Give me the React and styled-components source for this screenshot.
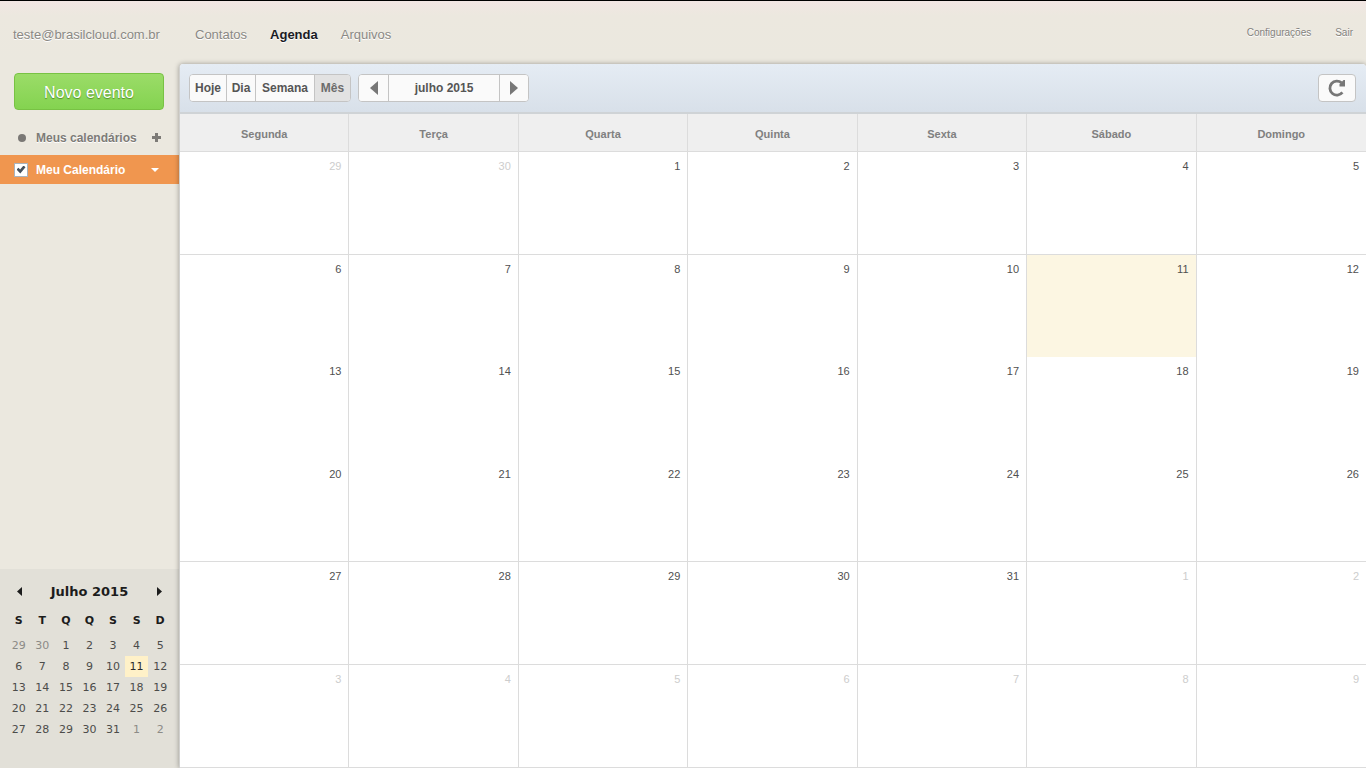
import React from "react";
import styled, { createGlobalStyle } from "styled-components";

const GlobalStyle = createGlobalStyle`
  *, *::before, *::after { box-sizing: border-box; }
  body {
    margin: 0;
    font-family: "Liberation Sans", Arial, sans-serif;
    font-size: 12px;
    color: #555;
    background: #ebe8df;
  }
  button, input { font: inherit; margin: 0; }
  button { cursor: pointer; }
`;

const Page = styled.div`
  display: flex;
  flex-direction: column;
  min-height: 100vh;
  border-top: 1px solid #000;
  background: linear-gradient(#f2e6e4, #ece8df 14px, #ebe8df 60px);
`;

const TopBar = styled.header`
  display: flex;
  align-items: center;
  height: 63px;
  padding: 5px 13px 0;
  text-shadow: 0 1px 0 #fff;
`;

const Account = styled.span`
  width: 182px;
  font-size: 13px;
  line-height: 16px;
  color: #8a8884;
`;

const TopNav = styled.nav`
  display: flex;
  flex: 1;
  gap: 23px;
`;

const NavLink = styled.a`
  font-size: 13px;
  line-height: 16px;
  font-weight: ${(p) => (p.$active ? "bold" : "normal")};
  color: ${(p) => (p.$active ? "#1a1a24" : "#8a8884")};
  text-decoration: none;
`;

const UserNav = styled.nav`
  display: flex;
  gap: 24px;
`;

const SmallLink = styled.a`
  font-size: 10px;
  line-height: 16px;
  padding-bottom: 4px;
  color: #84827e;
  text-decoration: none;
`;

const Body = styled.div`
  display: flex;
  flex: 1;
`;

const Sidebar = styled.aside`
  display: flex;
  flex-direction: column;
  width: 179px;
  flex-shrink: 0;
`;

const NewEventButton = styled.button`
  height: 37px;
  margin: 9px 15px 14px 14px;
  padding: 2px 0 0;
  border: 1px solid #78c244;
  border-radius: 4px;
  background: linear-gradient(#9bdc68, #84d350);
  color: #fff;
  font-size: 16px;
  text-shadow: 0 1px 1px #4f8a2a;
`;

const GroupRow = styled.div`
  display: flex;
  align-items: center;
  height: 31px;
  padding: 0 18px 4px;
  font-weight: bold;
  color: #7d7b77;
  text-shadow: 0 1px 0 #fff;
`;

const Dot = styled.span`
  width: 8px;
  height: 8px;
  border-radius: 4px;
  background: #7a7875;
`;

const GroupTitle = styled.span`
  flex: 1;
  padding-left: 10px;
`;

const IconButton = styled.button`
  display: flex;
  align-items: center;
  justify-content: center;
  padding: 0;
  border: 0;
  background: none;
  color: inherit;
`;

const CalendarRow = styled.div`
  display: flex;
  align-items: center;
  height: 29px;
  padding: 0 19px 0 14px;
  background: #f0964f;
  color: #fff;
  font-weight: bold;
`;

const CalendarLabel = styled.label`
  display: flex;
  flex: 1;
  align-items: center;
  gap: 8px;
`;

const CheckBox = styled.input`
  appearance: none;
  display: grid;
  place-items: center;
  width: 14px;
  height: 14px;
  border: 1px solid #a9b3bd;
  background: #fff;
  &:checked::after {
    content: "";
    width: 9px;
    height: 8px;
    background: #44505c;
    clip-path: polygon(0 50%, 22% 28%, 40% 50%, 78% 0, 100% 22%, 42% 100%);
  }
`;

const MiniPanel = styled.section`
  margin-top: auto;
  height: 199px;
  padding: 12px 7px 0;
  background: #e2e0d8;
  font-family: "DejaVu Sans", Verdana, sans-serif;
  color: #1c1c1c;
`;

const MiniHead = styled.div`
  display: flex;
  align-items: center;
  justify-content: space-between;
  height: 21px;
  padding: 0 10px;
`;

const MiniTitle = styled.h2`
  margin: 0;
  font-size: 13px;
  line-height: 20px;
  font-weight: bold;
`;

const MiniTable = styled.table`
  width: 165px;
  table-layout: fixed;
  border-collapse: collapse;
  margin-top: 4px;
  font-size: 11px;
  line-height: 13px;
`;

const MiniDayName = styled.th`
  height: 29px;
  padding: 0;
`;

const MiniDay = styled.td`
  height: 21px;
  padding: 0;
  text-align: center;
  color: ${(p) => (p.$today ? "#2c2c2c" : p.$other ? "#8c8b87" : "#4c4c4a")};
  background: ${(p) => (p.$today ? "#fff1c8" : "none")};
`;

const Main = styled.main`
  flex: 1;
  min-width: 0;
  border-left: 1px solid #d0d0ce;
  border-radius: 4px 4px 0 0;
  background: #fff;
  box-shadow: 0 0 5px rgba(0, 0, 0, 0.35);
  overflow: hidden;
`;

const Toolbar = styled.div`
  display: flex;
  align-items: center;
  height: 50px;
  padding: 0 10px 1px 9px;
  border-bottom: 2px solid #cfd3d6;
  background: linear-gradient(#e5ecf4, #d8e0e9);
`;

const ButtonGroup = styled.div`
  display: flex;
  height: 28px;
  margin-right: 7px;
  border: 1px solid #c4c4c4;
  border-radius: 4px;
  background: #fafafa;
  overflow: hidden;
`;

const ToolButton = styled.button`
  display: flex;
  align-items: center;
  justify-content: center;
  width: ${(p) => p.$width}px;
  padding: 0;
  border: 0;
  border-right: 1px solid #c4c4c4;
  background: ${(p) => (p.$active ? "#e2e2e2" : "#fafafa")};
  color: ${(p) => (p.$active ? "#6c6c6c" : "#555")};
  font-weight: bold;
  &:last-child { border-right: 0; }
  svg { color: #777; }
`;

const RefreshButton = styled.button`
  display: flex;
  align-items: center;
  justify-content: center;
  width: 38px;
  height: 28px;
  margin-left: auto;
  padding: 0;
  border: 1px solid #c4c4c4;
  border-radius: 4px;
  background: #fafafa;
`;

const MonthTable = styled.table`
  width: 100%;
  table-layout: fixed;
  border-collapse: separate;
  border-spacing: 0;
`;

const WeekDay = styled.th`
  height: 38px;
  padding: 3px 0 0;
  border-right: 1px solid #dcdcdc;
  border-bottom: 1px solid #dcdcdc;
  background: #efefef;
  color: #808080;
  font-size: 11px;
  line-height: 14px;
  &:last-child { border-right: 0; }
`;

const Day = styled.td`
  height: calc((100vh - 153px) / 6);
  padding: 7px 7px 0;
  vertical-align: top;
  text-align: right;
  font-size: 11px;
  line-height: 14px;
  border-right: 1px solid #dcdcdc;
  border-bottom: ${(p) => (p.$line ? "1px solid #dcdcdc" : "0")};
  color: ${(p) => (p.$other ? "#cdcdcd" : "#505050")};
  background: ${(p) => (p.$today ? "#fcf6e2" : "#fff")};
  &:last-child { border-right: 0; }
  tr:last-child > & { height: calc((100vh - 153px) / 6 + 1px); }
`;

const Arrow = ({ dir, w, h }) => (
  <svg width={w} height={h} viewBox="0 0 8 14" preserveAspectRatio="none" fill="currentColor" aria-hidden="true">
    <path d={dir === "left" ? "M8 0V14L0 7Z" : "M0 0V14L8 7Z"} />
  </svg>
);

const weekDays = ["Segunda", "Terça", "Quarta", "Quinta", "Sexta", "Sábado", "Domingo"];
const miniNames = ["S", "T", "Q", "Q", "S", "S", "D"];
const ruledWeeks = [0, 3, 4, 5];

const weeks = Array.from({ length: 6 }, (_, w) =>
  Array.from({ length: 7 }, (_, d) => {
    const date = new Date(2015, 5, 29 + w * 7 + d);
    const other = date.getMonth() !== 6;
    return { day: date.getDate(), other, today: !other && date.getDate() === 11 };
  })
);

export default function App() {
  return (
    <>
      <GlobalStyle />
      <Page>
        <TopBar>
          <Account>teste@brasilcloud.com.br</Account>
          <TopNav>
            <NavLink href="#contatos">Contatos</NavLink>
            <NavLink href="#agenda" $active>Agenda</NavLink>
            <NavLink href="#arquivos">Arquivos</NavLink>
          </TopNav>
          <UserNav>
            <SmallLink href="#config">Configurações</SmallLink>
            <SmallLink href="#sair">Sair</SmallLink>
          </UserNav>
        </TopBar>
        <Body>
          <Sidebar>
            <NewEventButton type="button">Novo evento</NewEventButton>
            <GroupRow>
              <Dot />
              <GroupTitle>Meus calendários</GroupTitle>
              <IconButton type="button" aria-label="Adicionar calendário">
                <svg width="9" height="9" viewBox="0 0 9 9" fill="currentColor">
                  <path d="M3 0H6V3H9V6H6V9H3V6H0V3H3Z" />
                </svg>
              </IconButton>
            </GroupRow>
            <CalendarRow>
              <CalendarLabel>
                <CheckBox type="checkbox" defaultChecked />
                Meu Calendário
              </CalendarLabel>
              <IconButton type="button" aria-label="Opções do calendário">
                <svg width="10" height="5" viewBox="0 0 10 5" fill="currentColor">
                  <path d="M1 1H9L5 5Z" />
                </svg>
              </IconButton>
            </CalendarRow>
            <MiniPanel>
              <MiniHead>
                <IconButton type="button" aria-label="Mês anterior"><Arrow dir="left" w={5} h={9} /></IconButton>
                <MiniTitle>Julho 2015</MiniTitle>
                <IconButton type="button" aria-label="Próximo mês"><Arrow dir="right" w={5} h={9} /></IconButton>
              </MiniHead>
              <MiniTable>
                <thead>
                  <tr>{miniNames.map((n, i) => <MiniDayName key={i}>{n}</MiniDayName>)}</tr>
                </thead>
                <tbody>
                  {weeks.slice(0, 5).map((week, w) => (
                    <tr key={w}>
                      {week.map((d) => (
                        <MiniDay key={d.day} $other={d.other} $today={d.today}>{d.day}</MiniDay>
                      ))}
                    </tr>
                  ))}
                </tbody>
              </MiniTable>
            </MiniPanel>
          </Sidebar>
          <Main>
            <Toolbar>
              <ButtonGroup>
                <ToolButton type="button" $width={37}>Hoje</ToolButton>
                <ToolButton type="button" $width={29}>Dia</ToolButton>
                <ToolButton type="button" $width={59}>Semana</ToolButton>
                <ToolButton type="button" $width={35} $active>Mês</ToolButton>
              </ButtonGroup>
              <ButtonGroup>
                <ToolButton type="button" $width={30} aria-label="Anterior"><Arrow dir="left" w={8} h={14} /></ToolButton>
                <ToolButton type="button" $width={111}>julho 2015</ToolButton>
                <ToolButton type="button" $width={28} aria-label="Próximo"><Arrow dir="right" w={8} h={14} /></ToolButton>
              </ButtonGroup>
              <RefreshButton type="button" aria-label="Atualizar">
                <svg width="18" height="18" viewBox="0 0 18 18" aria-hidden="true">
                  <path d="M14.4 13.4A7 7 0 1 1 13.6 3.9" fill="none" stroke="#777" strokeWidth="2.8" />
                  <path d="M17 1V7.5H11.5V5.5L15.5 1Z" fill="#777" />
                </svg>
              </RefreshButton>
            </Toolbar>
            <MonthTable>
              <thead>
                <tr>{weekDays.map((n) => <WeekDay key={n}>{n}</WeekDay>)}</tr>
              </thead>
              <tbody>
                {weeks.map((week, w) => (
                  <tr key={w}>
                    {week.map((d) => (
                      <Day key={d.day} $other={d.other} $today={d.today} $line={ruledWeeks.includes(w)}>{d.day}</Day>
                    ))}
                  </tr>
                ))}
              </tbody>
            </MonthTable>
          </Main>
        </Body>
      </Page>
    </>
  );
}
